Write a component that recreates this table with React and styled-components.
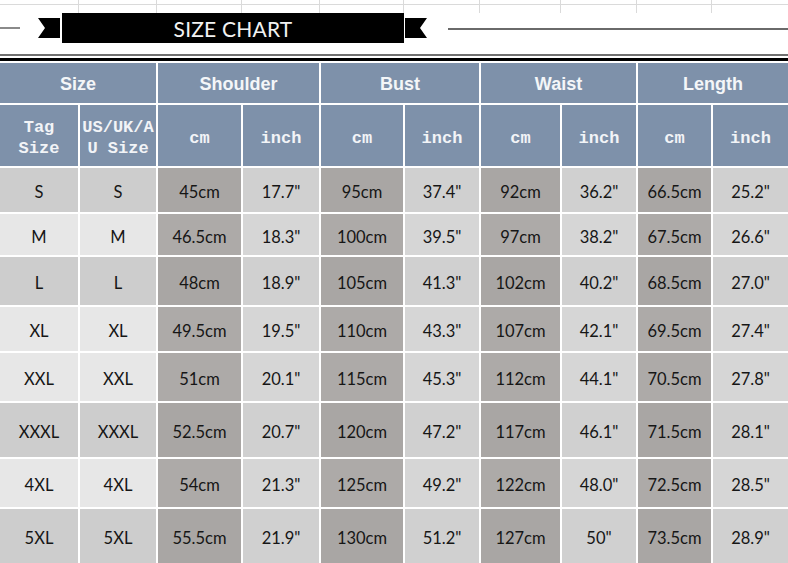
import React from "react";
import styled, { createGlobalStyle } from "styled-components";

const COLS = [78, 76, 83, 76, 82, 74, 79, 74, 73, 75];
const TEMPLATE = COLS.map((w) => `${w}px`).join(" ");

const GROUPS = ["Size", "Shoulder", "Bust", "Waist", "Length"];

const ROWS = [
  { tone: "mid", h: 44, cells: ["S", "S", "45cm", '17.7"', "95cm", '37.4"', "92cm", '36.2"', "66.5cm", '25.2"'] },
  { tone: "light", h: 41, cells: ["M", "M", "46.5cm", '18.3"', "100cm", '39.5"', "97cm", '38.2"', "67.5cm", '26.6"'] },
  { tone: "mid", h: 48, cells: ["L", "L", "48cm", '18.9"', "105cm", '41.3"', "102cm", '40.2"', "68.5cm", '27.0"'] },
  { tone: "light", h: 44, cells: ["XL", "XL", "49.5cm", '19.5"', "110cm", '43.3"', "107cm", '42.1"', "69.5cm", '27.4"'] },
  { tone: "light", h: 48, cells: ["XXL", "XXL", "51cm", '20.1"', "115cm", '45.3"', "112cm", '44.1"', "70.5cm", '27.8"'] },
  { tone: "mid", h: 54, cells: ["XXXL", "XXXL", "52.5cm", '20.7"', "120cm", '47.2"', "117cm", '46.1"', "71.5cm", '28.1"'] },
  { tone: "light", h: 48, cells: ["4XL", "4XL", "54cm", '21.3"', "125cm", '49.2"', "122cm", '48.0"', "72.5cm", '28.5"'] },
  { tone: "mid", h: 54, cells: ["5XL", "5XL", "55.5cm", '21.9"', "130cm", '51.2"', "127cm", '50"', "73.5cm", '28.9"'] },
];

const kindOf = (i) => (i < 2 ? "size" : i % 2 === 0 ? "cm" : "inch");

const BG = {
  size: { mid: "#cdcdcd", light: "#e7e7e7" },
  cm: { mid: "#a9a6a4", light: "#adaaa8" },
  inch: { mid: "#d0d0d0", light: "#d6d6d6" },
};

export default function App() {
  const rowHeights = [40, 61, ...ROWS.map((r) => r.h)].map((h) => `${h}px`).join(" ");

  return (
    <>
      <Global />
      <S.Page>
        <S.GridStrip>
          {COLS.map((w, i) => (
            <S.GridCell key={i} />
          ))}
        </S.GridStrip>

        <S.TitleBar>
          <S.ShortLine />
          <S.Tail viewBox="0 0 22 20" $left>
            <polygon points="0,0 22,0 22,20 0,20 7,10" fill="#000" />
          </S.Tail>
          <S.Banner>SIZE CHART</S.Banner>
          <S.Tail viewBox="0 0 22 20">
            <polygon points="0,0 22,0 15,10 22,20 0,20" fill="#000" />
          </S.Tail>
          <S.LongLine />
        </S.TitleBar>

        <S.DoubleRule />

        <S.Table style={{ gridTemplateRows: rowHeights }}>
          {GROUPS.map((g) => (
            <S.GroupHead key={g}>{g}</S.GroupHead>
          ))}

          <S.SubHead>
            Tag
            <br />
            Size
          </S.SubHead>
          <S.SubHead>
            US/UK/A
            <br />U Size
          </S.SubHead>
          {[1, 2, 3, 4].map((n) => (
            <React.Fragment key={n}>
              <S.SubHead>cm</S.SubHead>
              <S.SubHead>inch</S.SubHead>
            </React.Fragment>
          ))}

          {ROWS.map((row, r) =>
            row.cells.map((v, i) => (
              <S.Cell key={`${r}-${i}`} $kind={kindOf(i)} $tone={row.tone}>
                {v}
              </S.Cell>
            ))
          )}
        </S.Table>
      </S.Page>
    </>
  );
}

const Global = createGlobalStyle`
  html, body {
    margin: 0;
    padding: 0;
    background: #fff;
  }
`;

const S = {
  Page: styled.div`
    width: 788px;
    height: 563px;
    overflow: hidden;
    background: #fff;
    display: flex;
    flex-direction: column;
  `,
  GridStrip: styled.div`
    display: grid;
    grid-template-columns: ${TEMPLATE};
    column-gap: 2px;
    height: 13px;
    background: linear-gradient(#dadada, #dadada) 0 4px / 100% 1px no-repeat;
  `,
  GridCell: styled.div`
    border-right: 1px solid #dadada;
    margin-right: -1px;
  `,
  TitleBar: styled.div`
    display: flex;
    align-items: center;
    height: 30px;
  `,
  ShortLine: styled.div`
    width: 20px;
    height: 2px;
    background: #8a8a8a;
    margin-right: 18px;
  `,
  Tail: styled.svg`
    width: 22px;
    height: 20px;
    flex: none;
    margin: ${(p) => (p.$left ? "0 2px 0 0" : "0 21px 0 1px")};
  `,
  Banner: styled.div`
    width: 342px;
    height: 30px;
    background: #000;
    color: #f2f2f2;
    font-family: Lato, "Liberation Sans", sans-serif;
    font-size: 21px;
    display: flex;
    align-items: center;
    justify-content: center;
    letter-spacing: 0.2px;
  `,
  LongLine: styled.div`
    flex: 1;
    height: 2px;
    background: #6a6a6a;
    margin-top: 1px;
  `,
  DoubleRule: styled.div`
    margin-top: 11px;
    height: 7px;
    border-top: 2px solid #707070;
    border-bottom: 3px solid #000;
    box-sizing: border-box;
  `,
  Table: styled.div`
    display: grid;
    grid-template-columns: ${TEMPLATE};
    gap: 2px;
    padding-top: 2px;
    background: #fff;
  `,
  GroupHead: styled.div`
    grid-column: span 2;
    background: #7e91aa;
    color: #f4f6f8;
    font-family: "Liberation Sans", Arial, sans-serif;
    font-weight: bold;
    font-size: 18px;
    padding-top: 3px;
    display: flex;
    align-items: center;
    justify-content: center;
  `,
  SubHead: styled.div`
    background: #7e91aa;
    color: #f2f4f7;
    font-family: "Liberation Mono", "Courier New", monospace;
    font-weight: bold;
    font-size: 17px;
    line-height: 21px;
    padding-top: 5px;
    display: flex;
    align-items: center;
    justify-content: center;
    text-align: center;
  `,
  Cell: styled.div`
    background: ${(p) => BG[p.$kind][p.$tone]};
    color: #161616;
    font-family: Lato, "Liberation Sans", sans-serif;
    font-size: 16.5px;
    padding-top: 4px;
    display: flex;
    align-items: center;
    justify-content: center;
  `,
};
